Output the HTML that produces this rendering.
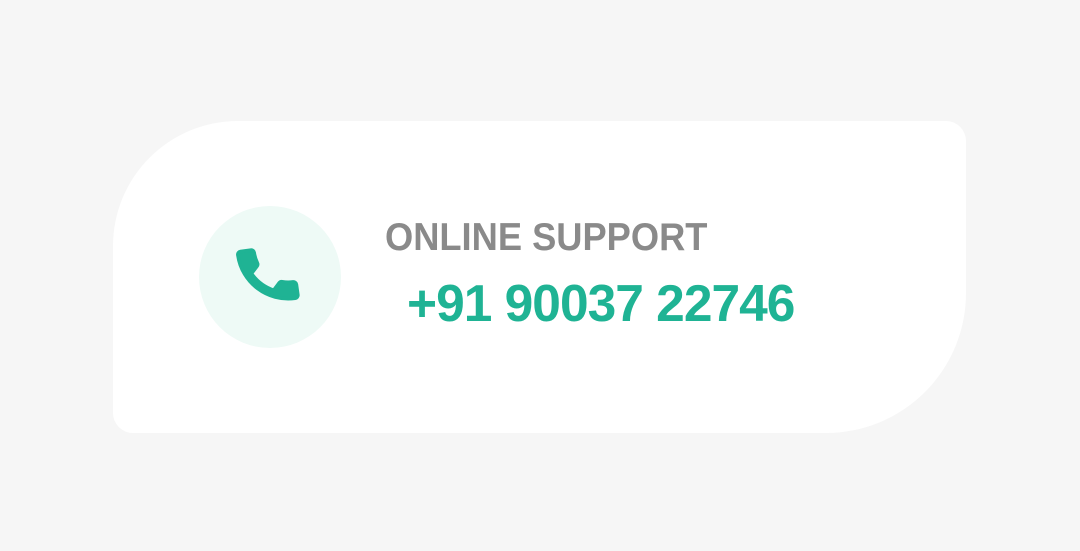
<!DOCTYPE html>
<html><head><style>
html,body{margin:0;padding:0;width:1080px;height:551px;background:#f6f6f6;overflow:hidden;font-family:"Liberation Sans",sans-serif}
.card{position:absolute;left:113px;top:121px;width:853px;height:312px;background:#fff;border-radius:125px 20px 140px 20px}
.circ{position:absolute;left:199px;top:206px;width:142px;height:142px;border-radius:50%;background:#eefaf6}
.icon{position:absolute;left:229px;top:236px}
.h{position:absolute;left:385px;top:218px;font-size:39px;font-weight:bold;color:#8a8a8a;transform:scaleX(0.93);transform-origin:0 0;white-space:nowrap;line-height:40px}
.n{position:absolute;left:407px;top:277px;font-size:52px;font-weight:bold;color:#1fb394;transform:scaleX(0.99);transform-origin:0 0;white-space:nowrap;line-height:54px;letter-spacing:-1px}
</style></head><body>
<div class="card"></div>
<div class="circ"></div>
<svg class="icon" width="78" height="78" viewBox="0 0 24 24"><path fill="#1fb394" stroke="#1fb394" stroke-width="1.2" stroke-linejoin="round" d="M6.62 10.79c1.44 2.83 3.76 5.14 6.59 6.59l2.2-2.2c.27-.27.67-.36 1.02-.24 1.12.37 2.33.57 3.57.57.55 0 1 .45 1 1V20c0 .55-.45 1-1 1-9.39 0-17-7.61-17-17 0-.55.45-1 1-1h3.5c.55 0 1 .45 1 1 0 1.25.2 2.45.57 3.57.11.35.03.74-.25 1.02l-2.2 2.2z" transform="rotate(-8 12 12) scale(0.92) translate(1 1)"/></svg>
<div class="h">ONLINE SUPPORT</div>
<div class="n">+91 90037 22746</div>
</body></html>
